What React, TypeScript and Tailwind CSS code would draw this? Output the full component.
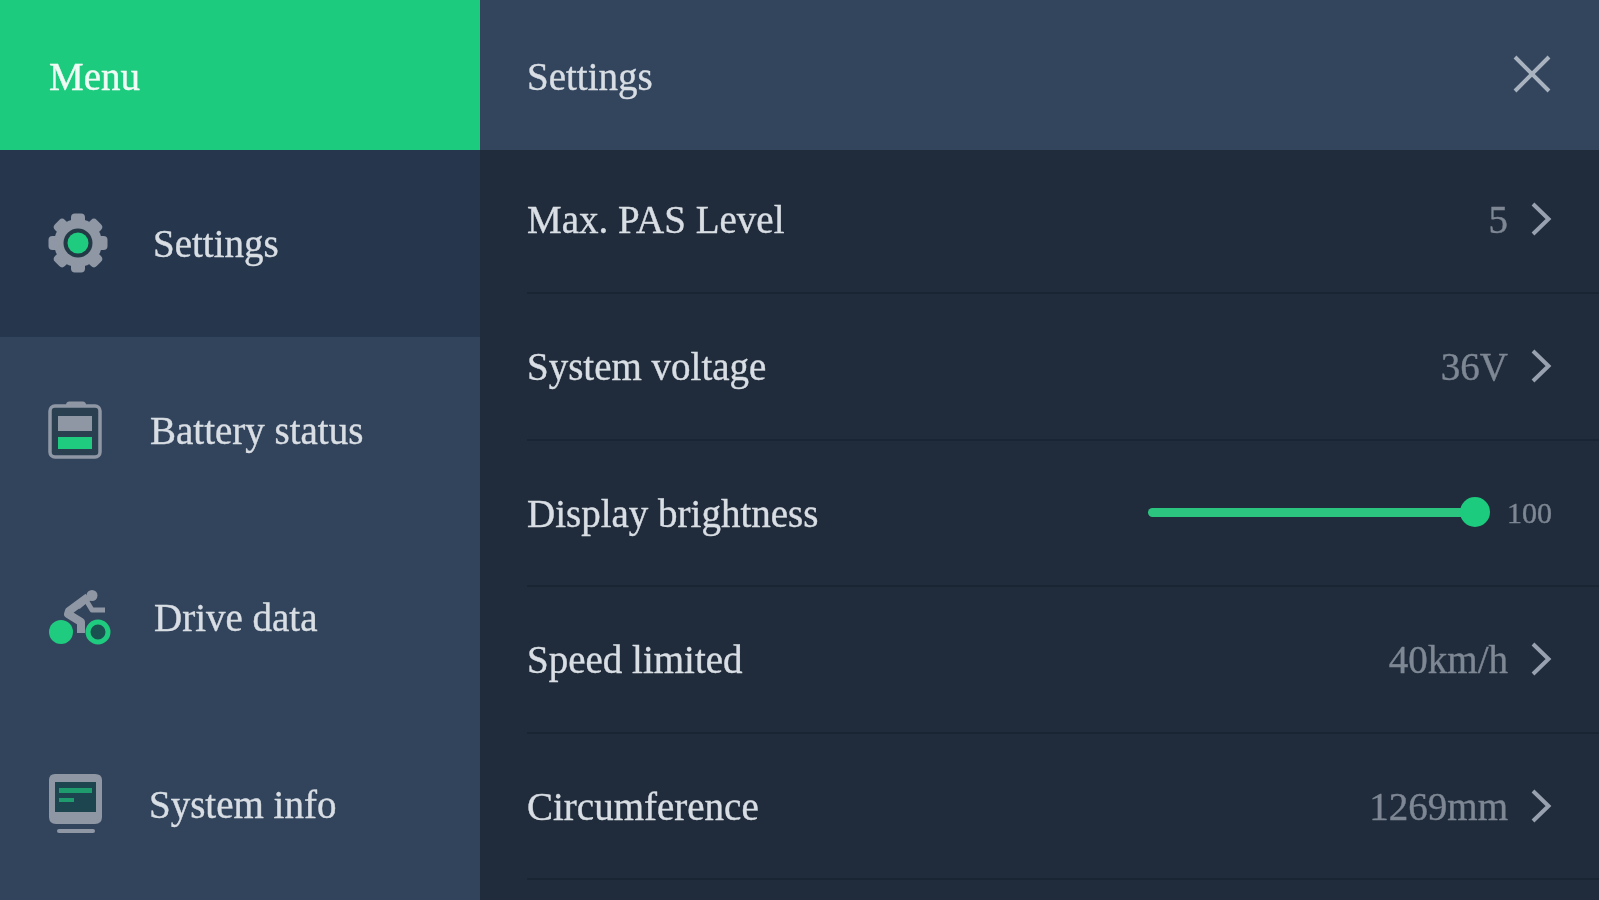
import React from "react";

const gray = "#8f97a5";
const green = "#1fcb7e";

function Gear() {
  const teeth = [0, 45, 90, 135, 180, 225, 270, 315];
  return (
    <svg width="60" height="60" viewBox="0 0 60 60">
      {teeth.map((a) => (
        <rect key={a} x="23" y="0.5" width="14" height="12" rx="4" fill={gray} transform={`rotate(${a} 30 30)`} />
      ))}
      <circle cx="30" cy="30" r="24" fill={gray} />
      <circle cx="30" cy="30" r="14.5" fill="#233a46" />
      <circle cx="30" cy="30" r="10.5" fill={green} />
    </svg>
  );
}

function Battery() {
  return (
    <svg width="56" height="58" viewBox="0 0 56 58">
      <rect x="18" y="0.5" width="20" height="7" rx="3.5" fill={gray} />
      <rect x="2" y="5" width="50" height="51" rx="5" fill="#2a3f50" stroke={gray} strokeWidth="3.5" />
      <rect x="10" y="15" width="34" height="15" fill={gray} />
      <rect x="10" y="36" width="34" height="12" fill={green} />
    </svg>
  );
}

function Bike() {
  return (
    <svg width="64" height="56" viewBox="0 0 64 56">
      <circle cx="44" cy="6.5" r="5.5" fill={gray} />
      <path d="M40 8 L21 22 L20 25 L33 33 L33 44" fill="none" stroke={gray} strokeWidth="8" strokeLinejoin="round" />
      <path d="M30 18 L38 11 L44 21 L57 21" fill="none" stroke={gray} strokeWidth="5" strokeLinejoin="round" />
      <circle cx="13" cy="43" r="12" fill={green} />
      <circle cx="50" cy="43" r="10" fill="#1a5050" stroke={green} strokeWidth="5" />
    </svg>
  );
}

function Monitor() {
  return (
    <svg width="56" height="60" viewBox="0 0 56 60">
      <path d="M7 0 H47 Q54 0 54 6 V43 Q54 50 47 50 H8 Q1 50 1 43 V6 Q1 0 7 0 Z" fill={gray} />
      <rect x="7" y="8" width="41" height="30" fill="#1d4550" />
      <rect x="11" y="14" width="33" height="5" fill={green} opacity="0.65" />
      <rect x="11" y="24" width="15" height="4" fill={green} opacity="0.65" />
      <rect x="9" y="55" width="38" height="4" rx="2" fill={gray} />
    </svg>
  );
}

function Chevron() {
  return (
    <svg width="22" height="36" viewBox="0 0 22 36" fill="none" className="shrink-0">
      <path d="M3 3 L18.5 18 L3 33" stroke="#98a1af" strokeWidth="4" />
    </svg>
  );
}

const menu = [
  { label: "Settings", icon: <Gear />, cls: "bg-[#26374d]", box: "w-[105px]" },
  { label: "Battery status", icon: <Battery />, cls: "", box: "w-[102px]" },
  { label: "Drive data", icon: <Bike />, cls: "", box: "w-[106px]" },
  { label: "System info", icon: <Monitor />, cls: "", box: "w-[101px]" },
];

const rows = [
  { label: "Max. PAS Level", value: "5", first: true },
  { label: "System voltage", value: "36V" },
  { label: "Display brightness", slider: true },
  { label: "Speed limited", value: "40km/h" },
  { label: "Circumference", value: "1269mm" },
];

export default function App() {
  return (
    <div className="w-[1599px] h-[900px] overflow-hidden flex bg-[#202c3b] text-[39px] font-['Liberation_Serif',serif] text-[#d9dee4] [-webkit-text-stroke:0.4px] blur-[0.7px]">
      <aside className="w-[480px] shrink-0 flex flex-col bg-[#32445c]">
        <header className="h-[150px] shrink-0 flex items-center pl-[49px] pt-[4px] bg-[#1ccb7d] text-[#f1fbf6]">Menu</header>
        {menu.map((m) => (
          <div key={m.label} className={`h-[187px] shrink-0 flex items-center pl-[48px] pb-[2px] ${m.cls}`}>
            <div className={`${m.box} shrink-0`}>{m.icon}</div>
            <span className="mt-[4px]">{m.label}</span>
          </div>
        ))}
      </aside>
      <main className="flex-1 flex flex-col">
        <header className="h-[150px] shrink-0 flex items-center justify-between pl-[47px] pr-[48px] bg-[#33445d]">
          <span className="mt-[4px]">Settings</span>
          <svg width="40" height="40" viewBox="0 0 40 40" fill="none" className="mr-[-1px] mb-[3px]">
            <path d="M3 3 L37 37 M37 3 L3 37" stroke="#a9b3c0" strokeWidth="4" />
          </svg>
        </header>
        <div className="pl-[47px] flex flex-col">
          {rows.map((r) => (
            <div
              key={r.label}
              className={`${r.first ? "h-[144px] pb-[4px]" : "h-[146.5px]"} shrink-0 flex items-center justify-between border-b-[2px] border-[#1a2533] pr-[47px]`}
            >
              <span className="mt-[2px]">{r.label}</span>
              {r.slider ? (
                <div className="flex items-center">
                  <div className="relative w-[327px] h-[9px] rounded-full bg-[#2cc57f]">
                    <div className="absolute right-[-15px] top-[-11px] w-[30px] h-[30px] rounded-full bg-[#1ccb7d]" />
                  </div>
                  <span className="ml-[32px] text-[30px] text-[#7e8794]">100</span>
                </div>
              ) : (
                <div className="flex items-center gap-[22px]">
                  <span className="text-[#7e8794] mt-[2px]">{r.value}</span>
                  <Chevron />
                </div>
              )}
            </div>
          ))}
        </div>
      </main>
    </div>
  );
}
